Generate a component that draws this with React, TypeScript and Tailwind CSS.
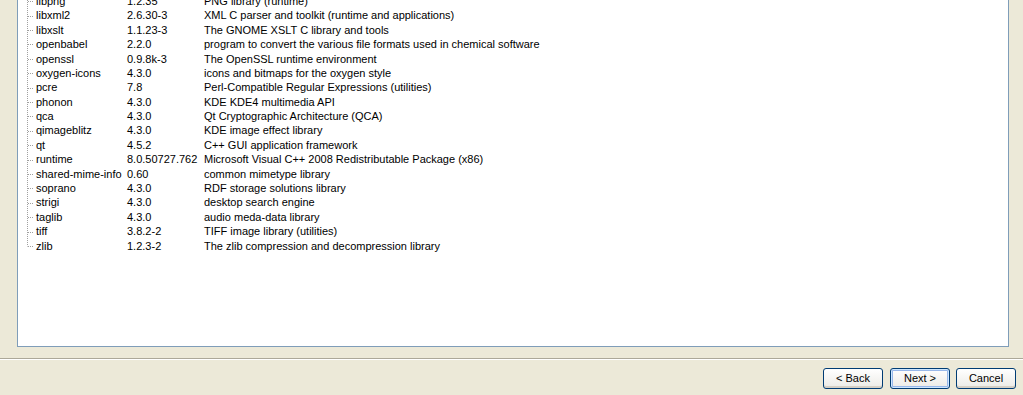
const rows: [string, string, string][] = [
  ["libpng", "1.2.35", "PNG library (runtime)"],
  ["libxml2", "2.6.30-3", "XML C parser and toolkit (runtime and applications)"],
  ["libxslt", "1.1.23-3", "The GNOME XSLT C library and tools"],
  ["openbabel", "2.2.0", "program to convert the various file formats used in chemical software"],
  ["openssl", "0.9.8k-3", "The OpenSSL runtime environment"],
  ["oxygen-icons", "4.3.0", "icons and bitmaps for the oxygen style"],
  ["pcre", "7.8", "Perl-Compatible Regular Expressions (utilities)"],
  ["phonon", "4.3.0", "KDE KDE4 multimedia API"],
  ["qca", "4.3.0", "Qt Cryptographic Architecture (QCA)"],
  ["qimageblitz", "4.3.0", "KDE image effect library"],
  ["qt", "4.5.2", "C++ GUI application framework"],
  ["runtime", "8.0.50727.762", "Microsoft Visual C++ 2008 Redistributable Package (x86)"],
  ["shared-mime-info", "0.60", "common mimetype library"],
  ["soprano", "4.3.0", "RDF storage solutions library"],
  ["strigi", "4.3.0", "desktop search engine"],
  ["taglib", "4.3.0", "audio meda-data library"],
  ["tiff", "3.8.2-2", "TIFF image library (utilities)"],
  ["zlib", "1.2.3-2", "The zlib compression and decompression library"],
];

const ROW = 14.4;

function TreeLines() {
  const h = rows.length * ROW;
  const lastMid = (rows.length - 1) * ROW + ROW / 2;
  return (
    <svg width="9" height={h} className="shrink-0">
      <line x1="1.5" y1="0" x2="1.5" y2={Math.round(lastMid) + 0.5} stroke="#a0a0a0" strokeDasharray="1 1" />
      {rows.map((_, i) => {
        const y = Math.round(i * ROW + ROW / 2) + 0.5;
        return <line key={i} x1="2" y1={y} x2="8" y2={y} stroke="#a0a0a0" strokeDasharray="1 1" />;
      })}
    </svg>
  );
}

function XpButton({ label, focused }: { label: string; focused?: boolean }) {
  return (
    <button
      className={
        "w-[60px] h-[21px] rounded-[3px] border border-[#003c74] bg-gradient-to-b from-white to-[#ecebe6] text-[11px] text-black leading-none " +
        (focused ? "shadow-[inset_0_0_0_1px_#cee7ff,inset_0_0_0_2px_#98b8ea]" : "shadow-[inset_0_-2px_0_#d6d0c5]")
      }
      style={{ fontFamily: "Tahoma, 'Liberation Sans', Arial, sans-serif" }}
    >
      {label}
    </button>
  );
}

export default function App() {
  return (
    <div
      className="w-[1023px] h-[395px] overflow-hidden bg-[#ece9d8] flex flex-col"
      style={{ fontFamily: "Tahoma, 'Liberation Sans', Arial, sans-serif" }}
    >
      {/* List panel, top scrolled out of view */}
      <div className="ml-[17px] mr-[14px] mt-[-20px] h-[367px] shrink-0 bg-white border border-[#7f9db9] pt-[13px] pl-[8px] flex">
        <TreeLines />
        <div className="flex flex-col ml-[1px]">
          {rows.map(([name, ver, desc]) => (
            <div key={name} className="flex items-center h-[14.4px] text-[11px] text-black whitespace-nowrap">
              <span className="w-[91px]">{name}</span>
              <span className="w-[77px]">{ver}</span>
              <span>{desc}</span>
            </div>
          ))}
        </div>
      </div>

      {/* Separator */}
      <div className="mt-[11px] border-t border-[#aca899] border-b border-b-white" />

      {/* Buttons */}
      <div className="flex justify-end items-center gap-[6px] pr-[7px] mt-[8px]">
        <div className="flex gap-[7px]">
          <XpButton label="< Back" />
          <XpButton label="Next >" focused />
        </div>
        <XpButton label="Cancel" />
      </div>
    </div>
  );
}
